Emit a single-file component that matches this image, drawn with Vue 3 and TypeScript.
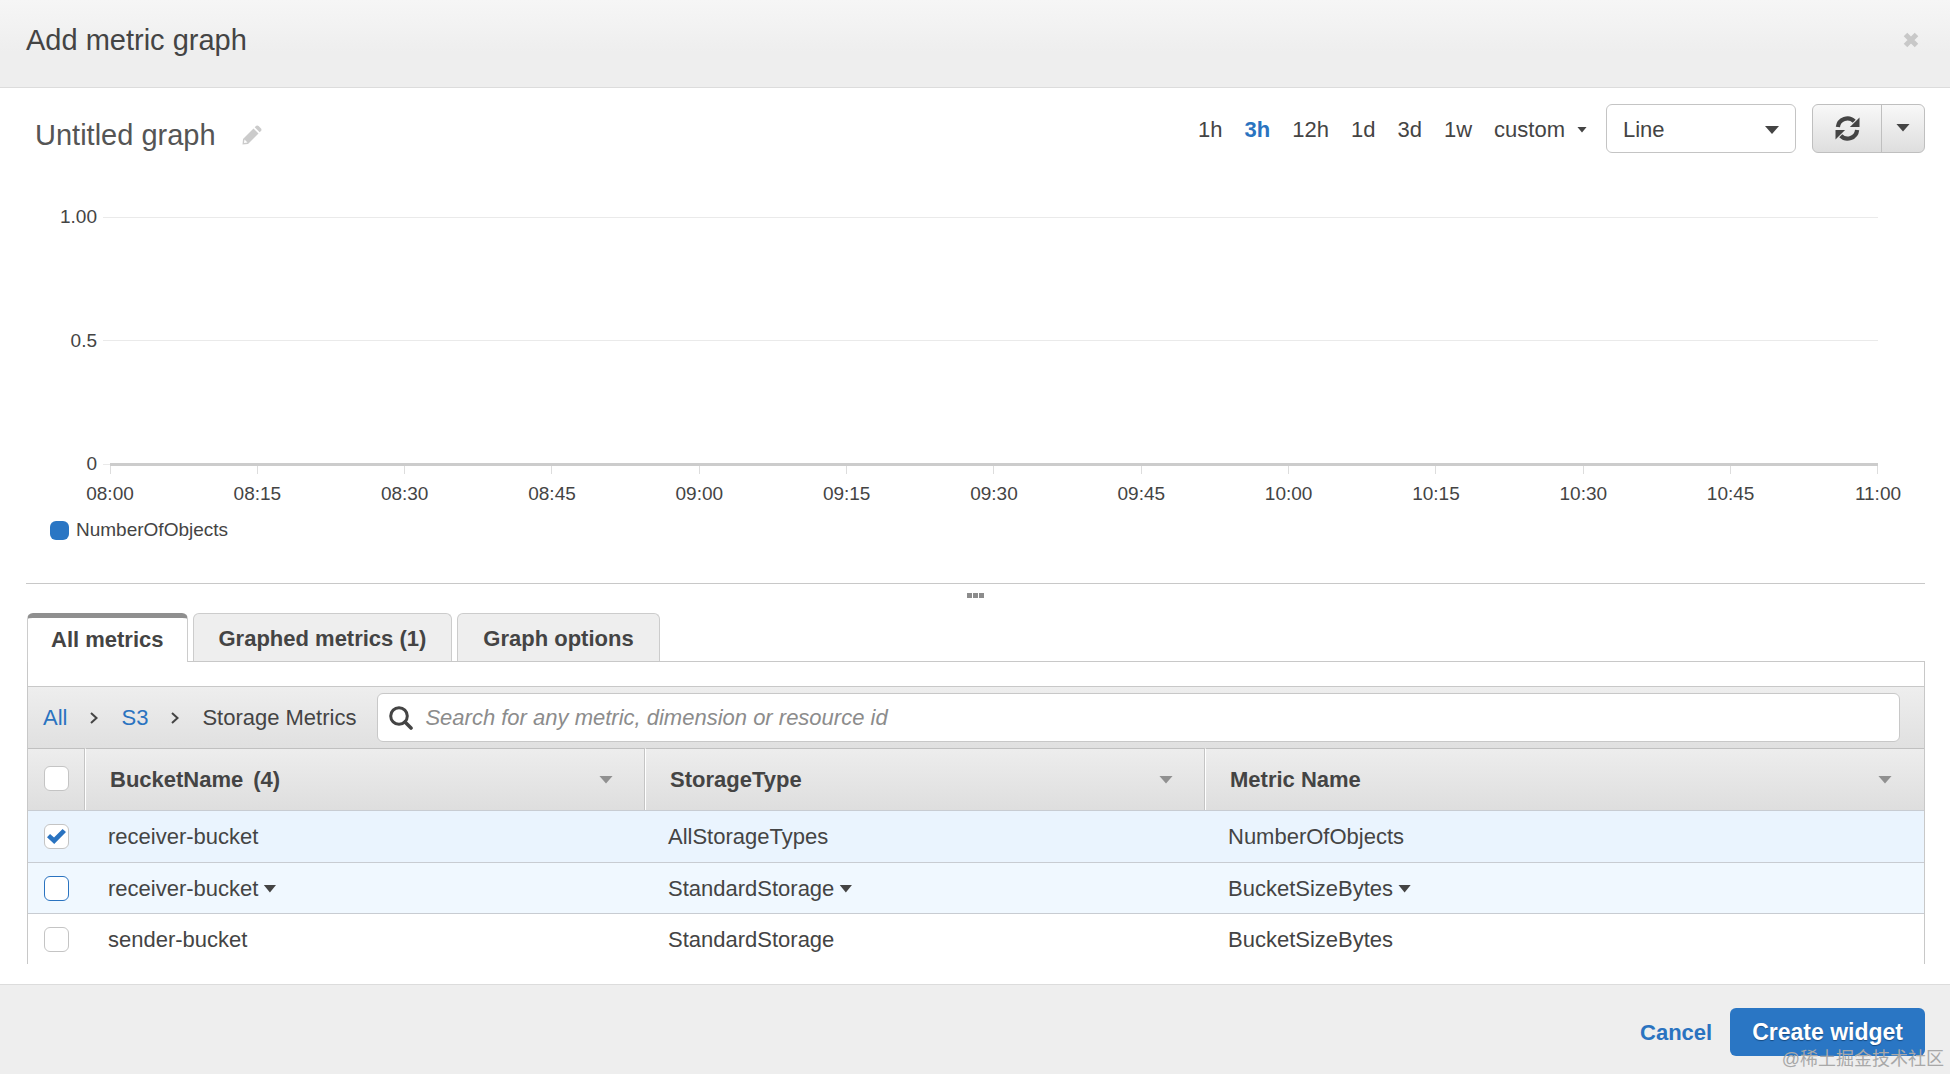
<script setup lang="ts">
import { ref } from 'vue'

interface MetricRow {
  id: number
  bucket: string
  storage: string
  metric: string
  checked: boolean
  state: '' | 'selected' | 'hovered'
}

const ranges = ['1h', '3h', '12h', '1d', '3d', '1w']
const activeRange = ref('3h')
const graphType = ref('Line')
const search = ref('')
const allChecked = ref(false)

const yTicks = ['1.00', '0.5', '0']
const xTicks = [
  '08:00', '08:15', '08:30', '08:45', '09:00', '09:15', '09:30',
  '09:45', '10:00', '10:15', '10:30', '10:45', '11:00',
]

const tabs = ['All metrics', 'Graphed metrics (1)', 'Graph options']
const activeTab = ref('All metrics')

const columns = [
  { label: 'BucketName', count: '(4)' },
  { label: 'StorageType', count: '' },
  { label: 'Metric Name', count: '' },
]

const rows = ref<MetricRow[]>([
  { id: 1, bucket: 'receiver-bucket', storage: 'AllStorageTypes', metric: 'NumberOfObjects', checked: true, state: 'selected' },
  { id: 2, bucket: 'receiver-bucket', storage: 'StandardStorage', metric: 'BucketSizeBytes', checked: false, state: 'hovered' },
  { id: 3, bucket: 'sender-bucket', storage: 'StandardStorage', metric: 'BucketSizeBytes', checked: false, state: '' },
])
</script>

<template>
  <div class="dialog">
    <header class="dialog-head">
      <h1>Add metric graph</h1>
      <button class="close" type="button" aria-label="Close">
        <svg width="16" height="16" viewBox="0 0 16 16"><path d="M2.5 2.5L13.5 13.5M13.5 2.5L2.5 13.5" stroke="#c8c8c8" stroke-width="5" /></svg>
      </button>
    </header>

    <main class="content">
      <div class="toolbar">
        <h2>Untitled graph</h2>
        <button class="edit" type="button" aria-label="Edit title">
          <svg width="20" height="20" viewBox="0 0 20 20" fill="#cbcbcb">
            <path d="M11.5 3.5L16.5 8.5L6 19L0.5 19.5L1 14Z" />
            <path d="M12.7 2.3L14.3 0.8Q15.5 0 16.6 1L19 3.4Q20 4.5 19.2 5.7L17.7 7.3Z" />
            <path d="M2.5 14.5L5.5 17.5L2 18Z" fill="#fff" />
          </svg>
        </button>
        <div class="ranges">
          <button
            v-for="r in ranges"
            :key="r"
            type="button"
            :class="{ active: r === activeRange }"
            @click="activeRange = r"
          >{{ r }}</button>
          <button class="custom" type="button">custom<span class="caret small"></span></button>
        </div>
        <div class="select-box">
          <select v-model="graphType" aria-label="Graph type">
            <option>Line</option>
            <option>Stacked area</option>
            <option>Number</option>
          </select>
          <span class="caret large"></span>
        </div>
        <div class="split">
          <button class="refresh" type="button" aria-label="Refresh">
            <svg width="25" height="25" viewBox="0 0 26 26" fill="none" stroke="#444" stroke-width="4.4">
              <path d="M3 11.5A10 10 0 0 1 20 5.5" />
              <path d="M23 14.5A10 10 0 0 1 6 20.5" />
              <path d="M25.5 1.5V11.5H15.5Z" fill="#444" stroke="none" />
              <path d="M0.5 24.5V14.5H10.5Z" fill="#444" stroke="none" />
            </svg>
          </button>
          <button class="more" type="button" aria-label="Refresh options"><span class="caret large"></span></button>
        </div>
      </div>

      <section class="chart">
        <div class="y-rows">
          <div v-for="y in yTicks" :key="y" class="y-row" :class="{ base: y === '0' }">
            <span class="y-label">{{ y }}</span>
            <span class="stub"></span>
            <span class="grid-line"></span>
          </div>
        </div>
        <div class="x-axis">
          <div v-for="x in xTicks" :key="x" class="x-tick">
            <span class="mark"></span>
            <span>{{ x }}</span>
          </div>
        </div>
        <div class="legend"><span class="swatch"></span>NumberOfObjects</div>
      </section>

      <div class="splitter"><i></i><i></i><i></i></div>

      <nav class="tabs">
        <button
          v-for="t in tabs"
          :key="t"
          type="button"
          :class="{ active: t === activeTab }"
          @click="activeTab = t"
        >{{ t }}</button>
      </nav>

      <section class="panel">
        <div class="path-bar">
          <a href="#">All</a>
          <svg class="chevron" width="8" height="12" viewBox="0 0 8 12"><path d="M1 1L6.5 6L1 11" fill="none" stroke="#444" stroke-width="2" /></svg>
          <a href="#">S3</a>
          <svg class="chevron" width="8" height="12" viewBox="0 0 8 12"><path d="M1 1L6.5 6L1 11" fill="none" stroke="#444" stroke-width="2" /></svg>
          <span class="here">Storage Metrics</span>
          <label class="search">
            <svg width="24" height="24" viewBox="0 0 24 24" fill="none" stroke="#444">
              <circle cx="10" cy="10" r="8.3" stroke-width="3" />
              <path d="M16 16L22 22" stroke-width="3.6" stroke-linecap="round" />
            </svg>
            <input v-model="search" type="text" aria-label="Search metrics" placeholder="Search for any metric, dimension or resource id" />
          </label>
        </div>

        <table>
          <colgroup>
            <col class="c-check" />
            <col class="c-dim" />
            <col class="c-dim" />
            <col />
          </colgroup>
          <thead>
            <tr>
              <th class="check"><input v-model="allChecked" type="checkbox" aria-label="Select all metrics" /></th>
              <th v-for="c in columns" :key="c.label">
                <div class="th-inner">
                  <span>{{ c.label }}</span>
                  <span v-if="c.count" class="count">{{ c.count }}</span>
                  <span class="caret sort"></span>
                </div>
              </th>
            </tr>
          </thead>
          <tbody>
            <tr v-for="row in rows" :key="row.id" :class="row.state">
              <td class="check"><input v-model="row.checked" type="checkbox" :aria-label="`Select ${row.bucket} ${row.metric}`" /></td>
              <td v-for="value in [row.bucket, row.storage, row.metric]" :key="value">
                {{ value }}<span v-if="row.state === 'hovered'" class="caret cell"></span>
              </td>
            </tr>
          </tbody>
        </table>
      </section>
    </main>

    <footer class="dialog-foot">
      <button class="cancel" type="button">Cancel</button>
      <button class="create" type="button">Create widget</button>
      <span class="watermark">@稀土掘金技术社区</span>
    </footer>
  </div>
</template>

<style>
body {
  background: #fff;
}
</style>

<style scoped>
* {
  box-sizing: border-box;
}

.dialog {
  display: flex;
  flex-direction: column;
  min-height: 100vh;
  color: #444;
  font: 22px/26px "Liberation Sans", Arial, "Noto Sans CJK SC", sans-serif;
}

button,
input,
select {
  margin: 0;
  padding: 0;
  border: 0;
  background: none;
  color: inherit;
  font: inherit;
}

h1,
h2 {
  margin: 0;
  font-size: 29px;
  line-height: 34px;
  font-weight: 400;
}

h2 {
  color: #555;
}

a {
  color: #2a73c0;
  text-decoration: none;
}

.caret {
  display: inline-block;
  background: #444;
  clip-path: polygon(0 0, 100% 0, 50% 100%);
}

.caret.small {
  width: 10px;
  height: 6px;
}

.caret.large {
  width: 14px;
  height: 8px;
}

.caret.sort {
  width: 14px;
  height: 8px;
  margin-left: auto;
  background: #909090;
}

.caret.cell {
  width: 13px;
  height: 8px;
  margin-left: 5px;
  vertical-align: 3px;
}

.dialog-head {
  display: flex;
  justify-content: space-between;
  align-items: center;
  height: 88px;
  padding: 0 31px 8px 26px;
  border-bottom: 1px solid #dcdcdc;
  background: linear-gradient(#f6f6f6, #eeeeee 60%);
}

.close,
.edit {
  display: flex;
}

.content {
  flex: 1;
  padding: 16px 25px 0 26px;
}

.toolbar {
  display: flex;
  align-items: center;
  height: 49px;
}

.toolbar h2 {
  padding: 12px 0 0 9px;
}

.edit {
  margin: 12px 0 0 26px;
}

.ranges {
  display: flex;
  gap: 22px;
  margin-left: auto;
  padding-top: 2px;
}

.ranges .active {
  color: #2a73c0;
  font-weight: 700;
}

.custom {
  display: flex;
  align-items: center;
  gap: 12px;
}

.select-box {
  position: relative;
  width: 190px;
  height: 49px;
  margin: 0 16px 0 19px;
}

.select-box select {
  width: 100%;
  height: 100%;
  padding: 3px 16px 0;
  border: 1px solid #c4c4c4;
  border-radius: 6px;
  background: #fff;
  appearance: none;
}

.select-box .caret {
  position: absolute;
  right: 17px;
  top: 22px;
}

.split {
  display: flex;
  height: 49px;
  border: 1px solid #bfbfbf;
  border-radius: 6px;
  background: linear-gradient(#f8f8f8, #dedede);
}

.split button {
  display: flex;
  justify-content: center;
  align-items: center;
}

.refresh {
  width: 68px;
}

.split .more {
  width: 43px;
  padding-bottom: 2px;
  border-left: 1px solid #bfbfbf;
}

.chart {
  margin-top: 52px;
  font-size: 19px;
  line-height: 24px;
}

.y-rows {
  display: flex;
  flex-direction: column;
  justify-content: space-between;
  height: 271px;
}

.y-row {
  display: flex;
  align-items: center;
  padding-right: 47px;
}

.y-label {
  width: 71px;
  margin-right: 6px;
  text-align: right;
}

.stub {
  width: 7px;
  height: 1px;
  background: #eaeaea;
}

.grid-line {
  flex: 1;
  height: 1px;
  background: #eaeaea;
}

.base .grid-line {
  height: 3px;
  background: #ccc;
}

.x-axis {
  display: flex;
  justify-content: space-between;
  margin: -10px 47px 0 84px;
}

.x-tick {
  display: flex;
  flex-direction: column;
  align-items: center;
  width: 0;
}

.mark {
  width: 1px;
  height: 8px;
  margin-bottom: 8px;
  background: #ddd;
}

.legend {
  display: flex;
  align-items: center;
  gap: 7px;
  padding: 12px 0 0 24px;
}

.swatch {
  width: 19px;
  height: 19px;
  border-radius: 6px;
  background: #2a76c4;
}

.splitter {
  display: flex;
  justify-content: center;
  gap: 1px;
  height: 30px;
  margin-top: 41px;
  padding-top: 9px;
  border-top: 1px solid #c8c8c8;
}

.splitter i {
  width: 5px;
  height: 5px;
  background: #8c8c8c;
}

.tabs {
  position: relative;
  display: flex;
  gap: 5px;
  padding-left: 1px;
}

.tabs button {
  height: 48px;
  padding: 3px 25px 0;
  border: 1px solid #ccc;
  border-bottom: 0;
  border-radius: 6px 6px 0 0;
  background: #eee;
  font-weight: 700;
}

.tabs .active {
  height: 49px;
  margin-bottom: -1px;
  padding: 0 23px;
  border-top: 5px solid #8f8f8f;
  background: #fff;
}

.panel {
  margin-left: 1px;
  padding-top: 24px;
  border: 1px solid #c8c8c8;
  border-bottom: 0;
}

.path-bar {
  display: flex;
  align-items: center;
  height: 62px;
  padding: 0 24px 0 15px;
  border-top: 1px solid #c8c8c8;
  background: linear-gradient(#eee, #e0e0e0);
}

.chevron {
  margin: 0 23px;
}

.here {
  margin-right: 21px;
}

.search {
  display: flex;
  flex: 1;
  align-items: center;
  gap: 12px;
  height: 49px;
  padding-left: 11px;
  border: 1px solid #c8c8c8;
  border-radius: 6px;
  background: #fff;
}

.search input {
  flex: 1;
  height: 40px;
  outline: 0;
}

.search input::placeholder {
  color: #8c8c8c;
  font-style: italic;
}

table {
  width: 100%;
  border-collapse: separate;
  border-spacing: 0;
  table-layout: fixed;
}

.c-check {
  width: 57px;
}

.c-dim {
  width: 560px;
}

th {
  height: 62px;
  padding: 0 32px 0 24px;
  border-top: 1px solid #c0c0c0;
  border-left: 1px solid #fff;
  background: linear-gradient(#ededed, #dedede);
  box-shadow: -1px 0 #c4c4c4;
  text-align: left;
}

th.check {
  border-left: 0;
  box-shadow: none;
}

.th-inner {
  display: flex;
  align-items: center;
}

.count {
  margin-left: 10px;
}

td {
  height: 51px;
  padding: 1px 23px 0;
  border-top: 1px solid #c8ccd2;
}

th.check {
  padding: 0 0 3px 16px;
}

td.check {
  padding: 0 0 0 16px;
}

tbody tr:first-child td {
  height: 52px;
}

.selected td {
  background: #eaf4fe;
}

.hovered td {
  background: #f0f8ff;
}

input[type="checkbox"] {
  display: block;
  position: relative;
  width: 25px;
  height: 25px;
  border: 1px solid #c4c4c4;
  border-radius: 6px;
  background: #fff;
  appearance: none;
}

.hovered input[type="checkbox"] {
  border-color: #2a73c0;
}

input[type="checkbox"]:checked::after {
  content: "";
  position: absolute;
  left: 2px;
  top: 4px;
  width: 19px;
  height: 15px;
  background: #2a73c0;
  clip-path: polygon(0 55%, 16% 34%, 37% 56%, 82% 0, 100% 20%, 38% 100%);
}

.dialog-foot {
  position: relative;
  display: flex;
  justify-content: flex-end;
  align-items: center;
  gap: 18px;
  height: 90px;
  padding: 4px 25px 0;
  border-top: 1px solid #dcdcdc;
  background: #eee;
  font-weight: 700;
}

.cancel {
  padding-top: 2px;
  color: #2a73c0;
}

.create {
  height: 48px;
  padding: 0 22px;
  border-radius: 6px;
  background: #2a76c4;
  color: #fff;
  font-size: 23px;
  text-shadow: 0 1px 1px #164a80;
}

.watermark {
  position: absolute;
  right: 6px;
  bottom: 2px;
  color: #a8a8a8;
  font-size: 18px;
  font-weight: 400;
}
</style>
